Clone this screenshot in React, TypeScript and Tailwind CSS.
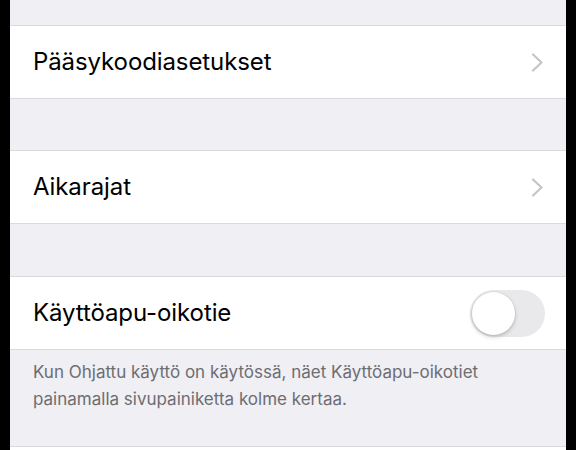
import React from "react";

const font = { fontFamily: "Inter, 'Noto Sans', sans-serif" };

function Chevron() {
  return (
    <svg width="13" height="19" viewBox="0 0 13 19" className="shrink-0">
      <polyline points="2,1.5 10.5,9.5 2,17.5" fill="none" stroke="#c4c4c9" strokeWidth="2.2" strokeLinecap="round" strokeLinejoin="round" />
    </svg>
  );
}

function Row({ label, right }: { label: string; right: React.ReactNode }) {
  return (
    <div className="h-[74px] shrink-0 bg-white border-y border-[#d9d9de] flex items-center justify-between pl-[23px] pr-[22px]">
      <span className="text-[24px] text-black tracking-[-0.1px]">{label}</span>
      {right}
    </div>
  );
}

function Toggle() {
  return (
    <div className="w-[75px] h-[47px] rounded-full bg-[#e9e9eb] p-[2px] flex items-center mr-[-1px]">
      <div className="w-[43px] h-[43px] rounded-full bg-white shadow-[0_2px_4px_rgba(0,0,0,0.2),0_0_0_1px_rgba(0,0,0,0.04)]" />
    </div>
  );
}

export default function App() {
  return (
    <div className="w-[576px] h-[450px] bg-black overflow-hidden" style={font}>
      <div className="mx-[10px] h-full bg-[#efeff4] flex flex-col">
        <div className="h-[25px] shrink-0" />
        <Row label="Pääsykoodiasetukset" right={<Chevron />} />
        <div className="h-[51px] shrink-0" />
        <Row label="Aikarajat" right={<Chevron />} />
        <div className="h-[52px] shrink-0" />
        <Row label="Käyttöapu-oikotie" right={<Toggle />} />
        <div className="h-[96px] shrink-0 pl-[23px] pr-[10px] pt-[9px] text-[17px] leading-[27px] text-[#6d6d72]">
          Kun Ohjattu käyttö on käytössä, näet Käyttöapu-oikotiet painamalla sivupainiketta kolme kertaa.
        </div>
        <div className="flex-1 bg-white border-t border-[#d9d9de]" />
      </div>
    </div>
  );
}
